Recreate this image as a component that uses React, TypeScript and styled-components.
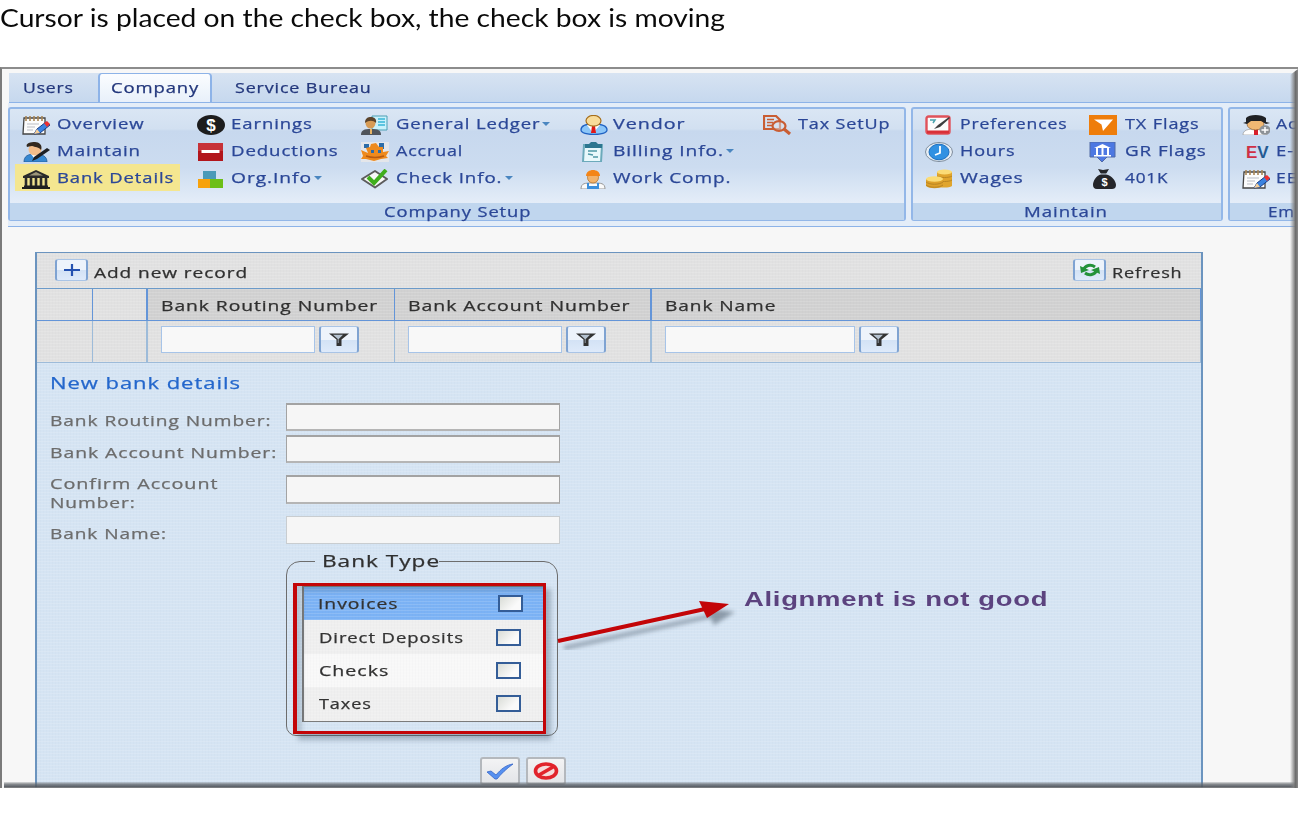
import React, { useLayoutEffect, useRef, useState } from 'react';
import styled, { createGlobalStyle, css } from 'styled-components';

const Global = createGlobalStyle`
  * { box-sizing: border-box; }
  body { margin: 0; background: #fff; font-family: "Open Sans", "Noto Sans", sans-serif; }
`;

/* ---------- text set to a fixed width ---------- */
const TextBox = styled.span<{ $w: number }>`
  display: block;
  flex: none;
  width: ${p => p.$w}px;
  white-space: nowrap;
  text-align: left;
`;
const TextInner = styled.span<{ $gap: number; $plain?: boolean }>`
  display: inline-block;
  transform-origin: 0 50%;
  letter-spacing: ${p => p.$gap}px;
  ${p => !p.$plain && '-webkit-text-stroke: 0.25px currentColor;'}
`;
function Wide({ w, gap = 0.7, plain, children }: { w: number; gap?: number; plain?: boolean; children: string }) {
  const ref = useRef<HTMLSpanElement>(null);
  const [scale, setScale] = useState(1);
  useLayoutEffect(() => {
    if (ref.current) setScale(w / (ref.current.offsetWidth - gap));
  }, [w, gap, children]);
  return (
    <TextBox $w={w}>
      <TextInner ref={ref} $gap={gap} $plain={plain} style={{ transform: `scaleX(${scale})` }}>{children}</TextInner>
    </TextBox>
  );
}

/* ---------- page ---------- */
const Page = styled.main`
  width: 1300px;
  height: 822px;
  overflow: hidden;
  background: #fff;
`;
const Title = styled.h1`
  margin: 0;
  height: 67px;
  font: 400 25.5px/34px Lato, "Open Sans", sans-serif;
  color: #0a0a0a;
`;
const Frame = styled.section`
  position: relative;
  width: 1298px;
  height: 721px;
  overflow: hidden;
  background: #f7f7f7;
  border-left: 2px solid #7b7b7b;
  border-top: 2px solid #8c8c8c;
  padding: 4px 0 0 6px;
`;
const BevelRight = styled.div`
  position: absolute;
  top: 0;
  right: 0;
  bottom: 0;
  width: 8px;
  background: linear-gradient(90deg, rgba(120,120,120,0), rgba(130,130,130,.75) 45%, #6c6c6c 70%, #8a8a8a);
  clip-path: polygon(100% 0, 100% 100%, 0 100%, 0 6px);
`;
const BevelBottom = styled.div`
  position: absolute;
  left: 2px;
  right: 0;
  bottom: 0;
  height: 6px;
  background: linear-gradient(rgba(110,115,120,.2), rgba(100,105,110,.75) 35%, rgba(80,85,92,.9) 75%, #8a8a8a);
`;

/* ---------- ribbon ---------- */
const Tabs = styled.nav`
  display: flex;
  height: 30px;
  width: 1300px;
  margin-left: 1px;
  background: linear-gradient(#d7e3f2, #c6d8ee);
  border-bottom: 1px solid #8db3e8;
  font-size: 14.5px;
  line-height: 30px;
  color: #23377c;
`;
const Tab = styled.a<{ $w: number; $pad: number; $active?: boolean }>`
  flex: none;
  width: ${p => p.$w}px;
  padding-left: ${p => p.$pad}px;
  ${p => p.$active && css`
    height: 29px;
    background: linear-gradient(#fbfdff, #e8f0fa);
    border: solid #8db3e8;
    border-width: 1px 2px 0;
    border-radius: 4px 4px 0 0;
    line-height: 28px;
  `}
`;
const Ribbon = styled.div`
  display: flex;
  gap: 5px;
  width: 1400px;
  height: 124px;
  padding: 4px 0 5px;
  background: #e4edf8;
  border-bottom: 1px solid #8db3e8;
`;
const Group = styled.section<{ $w: number }>`
  display: flex;
  flex-direction: column;
  flex: none;
  width: ${p => p.$w}px;
  border: 2px solid #93b7e8;
  border-bottom-width: 1px;
  border-radius: 3px;
  background: linear-gradient(#dae6f4, #d2e0f1 20px, #c7d8ee 22px, #ccdcf0 58px, #e4edf8 94px);
`;
const Columns = styled.div`
  display: flex;
  flex: 1;
  padding: 1px 0 0 5px;
`;
const Column = styled.div<{ $w: number }>`
  flex: none;
  width: ${p => p.$w}px;
`;
const Command = styled.button<{ $active?: boolean; $w?: number }>`
  display: flex;
  align-items: center;
  height: 27px;
  width: ${p => (p.$w ? p.$w + 'px' : 'auto')};
  padding: 0 0 0 7px;
  border: 0;
  background: ${p => (p.$active ? '#f4e690' : 'transparent')};
  color: #2b4797;
  font: 14.5px/22px "Open Sans", "Noto Sans", sans-serif;
`;
const IconCell = styled.span<{ $w: number }>`
  display: flex;
  flex: none;
  width: ${p => p.$w}px;
  padding-top: 2px;
`;
const Caption = styled.footer<{ $indent: number }>`
  height: 17px;
  padding-left: ${p => p.$indent}px;
  background: #c0d6ee;
  color: #2b4797;
  font-size: 14px;
  line-height: 17px;
`;
const Caret = styled.i`
  width: 0;
  border: 4.5px solid transparent;
  border-top: 4px solid #4a86c0;
  border-bottom: 0;
  margin-left: 3px;
`;

/* ---------- icons ---------- */
const notebook = (
  <>
    <path d="M2 3h21v16H1z" fill="#fcfcfc" stroke="#444" strokeWidth="1.3" />
    <path d="M4 1v5M8 1v5M12 1v5M16 1v5M20 1v5" stroke="#a98655" strokeWidth="1.6" />
    <path d="M5 9h12M5 12h8M5 15h6" stroke="#b9bcc4" />
    <path d="M12 19l3-5 9-7 4 3-10 8z" fill="#3b83e0" stroke="#173c88" />
    <path d="M22 8l3-2 3 3-3 3z" fill="#ee3030" /><path d="M12 19l3-5 3 4z" fill="#f6cf9a" />
  </>
);
const icons: Record<string, React.ReactNode> = {
  notebook,
  maintain: (
    <>
      <path d="M2 20c0-6 4-8 11-8s12 2 12 8z" fill="#3688d2" stroke="#245b94" strokeWidth=".8" />
      <path d="M9 12l3 4 5-4z" fill="#fff" />
      <ellipse cx="13" cy="7.500" rx="6.500" ry="6" fill="#f3bd8a" />
      <path d="M5 5C3 1 9 0 13 0s8 3 6 8c-2-3-6-3-9-4-2 0-4 1-5 1z" fill="#33291f" />
      <path d="M10 19l2-4 13-9 3 2-13 9z" fill="#1d1f23" />
    </>
  ),
  bank: (
    <>
      <path d="M1 7L14 1l13 6v2H1z" fill="#2a2a2a" /><path d="M7 6.500L14 3l7 3.500z" fill="#9c967a" />
      <path d="M4 9v8M9 9v8M14 9v8M19 9v8M24 9v8" stroke="#2a2a2a" strokeWidth="2.600" />
      <path d="M2 16.500h24V18h2v2H0v-2h2z" fill="#1f1f1f" />
    </>
  ),
  dollar: (
    <>
      <ellipse cx="14" cy="10" rx="14" ry="10" fill="#1d1d1d" />
      <text x="14" y="16" textAnchor="middle" fontSize="17" fontWeight="700" fill="#fff" fontFamily="Liberation Sans">$</text>
    </>
  ),
  minus: (<><path d="M1 1h25v18H1z" fill="#b2161c" /><path d="M1 1h25v8H1z" fill="#c73238" /><path d="M4.500 8h18v3h-18z" fill="#fff" /></>),
  blocks: (<><path d="M6 2h13v9H6z" fill="#4a9ab8" /><path d="M1 10h12v9H1z" fill="#f7a20c" /><path d="M13 10h13v9H13z" fill="#6cbf17" /></>),
  ledger: (
    <>
      <path d="M11 1h15v14H11z" fill="#c9f1fb" stroke="#4c9fb5" /><path d="M17 4h7M17 7h7M17 10h7" stroke="#37b5d8" strokeWidth="1.500" />
      <path d="M0 20c0-5 3-6 10-6s10 1 10 6z" fill="#50555c" />
      <ellipse cx="9.500" cy="8" rx="5" ry="5.500" fill="#d79b55" /><path d="M4 8c0-5 3-6 6-6s6 2 5 6c-3-3-7-3-11 0z" fill="#5b432b" /><path d="M9 14h2v5H9z" fill="#e6b366" />
    </>
  ),
  accrual: (
    <>
      <path d="M0 0h28v20H0z" fill="#e4e6ea" />
      <path d="M3 2h5v4H3zM18 1h5v6h-5z" fill="#2c6ca8" />
      <path d="M0 8l7 3-2-5 4-1 1-3 5-1 3 4 4 0 0 5 6-1-3 5 2 2-7 1-7 2-8-2-5 0 2-3z" fill="#ee8a1d" />
      <path d="M10 8h3v3h-3zM17 8h3v3h-3z" fill="#2c6ca8" />
      <path d="M5 14c6 2 12 2 18 0" stroke="#b85a10" strokeWidth="1.500" fill="none" />
    </>
  ),
  check: (
    <>
      <path d="M14 2l12 8-12 8.500L1 10z" fill="#f8f8f8" stroke="#5c5c5c" strokeWidth="2" strokeLinejoin="round" />
      <path d="M7 8l6 6L25 1" fill="none" stroke="#3fae1c" strokeWidth="4" />
    </>
  ),
  vendor: (
    <>
      <path d="M1 15c0-5 5-6 12-6s14 1 14 6c0 6-26 6-26 0z" fill="#8cc6f8" stroke="#1f61c2" strokeWidth="1.300" />
      <path d="M7 10l6 8 7-8z" fill="#fff" /><path d="M12 11h3l1 7h-5z" fill="#e01717" />
      <ellipse cx="13.500" cy="5.800" rx="7.500" ry="5.400" fill="#f8dc9a" stroke="#a66f1c" strokeWidth="1.200" />
    </>
  ),
  clipboard: (<><path d="M4 3h18l-1 17H3z" fill="#e8f8fb" stroke="#6caabb" strokeWidth="2" /><path d="M5 2h4l2-2h5l2 2h4v4H5z" fill="#2c7690" /><path d="M8 9h9M8 12l5 1M13 15h5" stroke="#4f98a7" strokeWidth="1.500" /></>),
  worker: (
    <>
      <path d="M1 20c0-6 4-6 12-6s12 0 12 6z" fill="#fafafa" stroke="#999" /><path d="M7 14h2v3h8v-3h2v6H7z" fill="#3b8edb" />
      <ellipse cx="13" cy="8.500" rx="5.500" ry="5.500" fill="#f2b36c" stroke="#b06c20" strokeWidth=".7" />
      <path d="M6 7c0-8 14-8 14 0z" fill="#f38518" />
    </>
  ),
  tax: (
    <>
      <path d="M1 1h12l4 4v9H1z" fill="none" stroke="#c95d33" strokeWidth="2.200" /><path d="M4 4.500h7M4 7.500h6M4 10.500h5" stroke="#c95d33" strokeWidth="1.500" />
      <ellipse cx="16" cy="11" rx="6.500" ry="4.800" fill="#dbe4ee" fillOpacity=".5" stroke="#c95d33" strokeWidth="2.200" /><path d="M21 14l6 5" stroke="#c95d33" strokeWidth="3.200" />
    </>
  ),
  prefs: (<><rect x="1.500" y="1.500" width="23" height="17" rx="2" fill="#fbfbfb" stroke="#e0525a" strokeWidth="2.400" /><path d="M2 17h22" stroke="#d93038" strokeWidth="3" /><path d="M5 5h5l-2 3" stroke="#49a2ad" strokeWidth="1.500" fill="none" /><path d="M9 14l4-4L24 2l1 1-10 9z" fill="#3d3d3d" /></>),
  clock: (<><ellipse cx="14" cy="10" rx="13.500" ry="9.500" fill="#e7eef5" stroke="#7c8b9b" /><ellipse cx="14" cy="10" rx="10" ry="7.800" fill="#3191e2" stroke="#1c6fc0" /><path d="M15 4v7l-5 2" fill="none" stroke="#fff" strokeWidth="1.800" /></>),
  coins: (
    <>
      <path d="M12 3v14c3 2 12 2 15 0V3z" fill="#e0a52d" /><path d="M12 7c3 2 12 2 15 0M12 11c3 2 12 2 15 0" fill="none" stroke="#b98522" />
      <ellipse cx="19.500" cy="3" rx="7.500" ry="2.500" fill="#fbdc76" />
      <path d="M1 10v7c3 3 14 3 17 0v-7z" fill="#dda02a" /><path d="M1 13c4 3 13 3 17 0M1 16c4 3 13 3 17 0" fill="none" stroke="#b98522" />
      <ellipse cx="9.500" cy="10" rx="8.500" ry="2.800" fill="#fbdc76" />
    </>
  ),
  tx: (<><path d="M0 0h28v20H0z" fill="#ee7d0b" /><path d="M5 4.500h19L14 16l-1.500-6.500z" fill="#fff" /></>),
  gr: (<><path d="M1 0h25v15h-8l-5 5-5-5H1z" fill="#4d78e2" stroke="#516aa5" /><path d="M5 6l8.500-4L22 6zM5 13h17v1.500H5z" fill="#fff" /><path d="M8 6v7M13.500 6v7M19 6v7" stroke="#fff" strokeWidth="2" /></>),
  bag: (
    <>
      <path d="M9 0l5 1 6-1-3 5c6 2 10 7 10 11 0 3-2 4-4 4H8c-3 0-4-2-4-4 0-4 3-9 8-11z" fill="#25262a" /><path d="M10 5h9" stroke="#c9d6e6" />
      <text x="15.500" y="17" textAnchor="middle" fontSize="11" fontWeight="700" fill="#fff" fontFamily="Liberation Sans">$</text>
    </>
  ),
  adduser: (
    <>
      <path d="M1 20c0-5 5-6 12-6s12 1 12 6z" fill="#fff" stroke="#999" strokeWidth=".7" /><path d="M12 14h4v6h-4z" fill="#d9202b" />
      <ellipse cx="13.500" cy="9" rx="8.500" ry="6" fill="#f1b873" stroke="#7a4c1f" strokeWidth=".6" />
      <path d="M1 8l3-1V3c3-4 16-4 20 0v4l4 1-4 1-5-3H9L5 9z" fill="#202124" />
      <ellipse cx="23" cy="15" rx="5.500" ry="4.800" fill="#8d9297" /><path d="M23 12v6M19.500 15h7" stroke="#fff" strokeWidth="1.500" />
    </>
  ),
  ev: (
    <text x="4" y="16" fontSize="17" fontWeight="700" fontFamily="Liberation Sans"><tspan fill="#cf2f45">E</tspan><tspan fill="#245a92">V</tspan></text>
  ),
};
const Art = styled.svg`
  display: block;
  flex: none;
`;
const Icon = ({ name }: { name: string }) => (
  <Art width="28" height="20" viewBox="0 0 28 20">{icons[name]}</Art>
);

type Item = { icon: string; text: string; w: number; menu?: boolean; active?: boolean };
type Col = { w: number; text: number; items: Item[] };
const groups: { w: number; caption: string; cw: number; indent: number; cols: Col[] }[] = [
  {
    w: 898, caption: 'Company Setup', cw: 147, indent: 374,
    cols: [
      { w: 175, text: 35, items: [{ icon: 'notebook', text: 'Overview', w: 86 }, { icon: 'maintain', text: 'Maintain', w: 83 }, { icon: 'bank', text: 'Bank Details', w: 116, active: true }] },
      { w: 164, text: 34, items: [{ icon: 'dollar', text: 'Earnings', w: 81 }, { icon: 'minus', text: 'Deductions', w: 107 }, { icon: 'blocks', text: 'Org.Info', w: 80, menu: true }] },
      { w: 219, text: 35, items: [{ icon: 'ledger', text: 'General Ledger', w: 143, menu: true }, { icon: 'accrual', text: 'Accrual', w: 67 }, { icon: 'check', text: 'Check Info.', w: 106, menu: true }] },
      { w: 183, text: 33, items: [{ icon: 'vendor', text: 'Vendor', w: 71 }, { icon: 'clipboard', text: 'Billing Info.', w: 110, menu: true }, { icon: 'worker', text: 'Work Comp.', w: 117 }] },
      { w: 140, text: 35, items: [{ icon: 'tax', text: 'Tax SetUp', w: 91 }] },
    ],
  },
  {
    w: 312, caption: 'Maintain', cw: 83, indent: 111,
    cols: [
      { w: 164, text: 35, items: [{ icon: 'prefs', text: 'Preferences', w: 106 }, { icon: 'clock', text: 'Hours', w: 55 }, { icon: 'coins', text: 'Wages', w: 63 }] },
      { w: 140, text: 36, items: [{ icon: 'tx', text: 'TX Flags', w: 74 }, { icon: 'gr', text: 'GR Flags', w: 81 }, { icon: 'bag', text: '401K', w: 43 }] },
    ],
  },
  {
    w: 160, caption: 'Em', cw: 26, indent: 38,
    cols: [
      { w: 150, text: 34, items: [{ icon: 'adduser', text: 'Ac', w: 21 }, { icon: 'ev', text: 'E-', w: 17 }, { icon: 'notebook', text: 'EE', w: 21 }] },
    ],
  },
];

/* ---------- grid ---------- */
const weave = css`
  background-image: repeating-linear-gradient(0deg, rgba(255,255,255,.13) 0 1px, transparent 1px 3px),
    repeating-linear-gradient(90deg, rgba(120,120,140,.025) 0 1px, transparent 1px 3px);
`;
const Panel = styled.section`
  width: 1168px;
  height: 600px;
  margin: 25px 0 0 27px;
  border: 2px solid #6b94bf;
  border-top-width: 1px;
  background-color: #d5e4f3;
  ${weave}
`;
const Toolbar = styled.header`
  display: flex;
  justify-content: space-between;
  height: 36px;
  padding: 5px 19px 0 18px;
  background-color: #e1e1e1;
  ${weave}
  border-bottom: 1px solid #6b9ac9;
  color: #303030;
  font-size: 14.5px;
  line-height: 29px;
`;
const Action = styled.div`
  display: flex;
  gap: 6px;
`;
const GlossButton = styled.button<{ $w: number; $h: number }>`
  display: flex;
  align-items: center;
  justify-content: center;
  flex: none;
  width: ${p => p.$w}px;
  height: ${p => p.$h}px;
  padding: 0;
  margin-top: 1px;
  border: 1px solid #a9c4e6;
  border-width: 1px 2px;
  border-color: #a9c4e6 #7fa3d2;
  border-radius: 3px;
  background: linear-gradient(#edf3fb 50%, #d3e2f5 52%, #deeafa);
`;
const Row = styled.div<{ $h: number; $line: string }>`
  display: flex;
  height: ${p => p.$h}px;
  border-bottom: 1px solid ${p => p.$line};
`;
const Cell = styled.div<{ $w?: number; $bg?: string; $edge?: number; $line: string }>`
  display: flex;
  align-items: flex-start;
  gap: 4px;
  flex: ${p => (p.$w ? 'none' : '1')};
  width: ${p => (p.$w ? p.$w + 'px' : 'auto')};
  background-color: ${p => p.$bg ?? '#e1e1e1'};
  ${weave}
  border-right: ${p => p.$edge ?? 1}px solid ${p => p.$line};
  padding-left: 13px;
  color: #303030;
  font-size: 14.5px;
  line-height: 33px;
`;
const FilterInput = styled.input<{ $w: number }>`
  width: ${p => p.$w}px;
  height: 27px;
  margin-top: 5px;
  border: 1px solid #a7c4e8;
  background: #f8f8f8;
`;
const FilterSlot = styled.span`
  display: flex;
  padding-top: 4px;
`;
const Funnel = () => (
  <FilterSlot>
    <GlossButton $w={40} $h={27}>
      <Art width="20" height="13" viewBox="0 0 20 13">
        <path d="M0 .5h20l-7.500 6V13h-5V6.500z" fill="#333" /><path d="M4 1.800h10l-4.500 4.500V10H8.800V6z" fill="#b5c2d0" />
      </Art>
    </GlossButton>
  </FilterSlot>
);

/* ---------- form ---------- */
const Form = styled.form`
  padding: 8px 0 0 13px;
`;
const FormTitle = styled.h2`
  margin: 0;
  height: 24px;
  color: #2467cc;
  font-size: 16px;
  font-weight: 400;
  line-height: 25px;
`;
const Field = styled.label<{ $top: number; $h: number }>`
  display: flex;
  align-items: center;
  height: ${p => p.$h}px;
  margin-top: ${p => p.$top}px;
  color: #6c6c6c;
  font-size: 14.5px;
  line-height: 19px;
`;
const FieldText = styled.span`
  flex: none;
  width: 236px;
  padding-top: 7px;
`;
const TextInput = styled.input<{ $soft?: boolean }>`
  width: 274px;
  height: 100%;
  background: #f6f6f6;
  border: 1px solid ${p => (p.$soft ? '#c9cdd0' : '#a3a3a3')};
  border-top-width: ${p => (p.$soft ? 1 : 2)}px;
  border-bottom-width: ${p => (p.$soft ? 1 : 2)}px;
  ${p => !p.$soft && 'border-bottom-color: #b5b5b5;'}
`;
const BankType = styled.fieldset`
  position: relative;
  min-width: 0;
  width: 272px;
  height: 185px;
  margin: 7px 0 0 236px;
  padding: 0;
  border: 1px solid #6d6d6d;
  border-radius: 14px 14px 10px 10px;
`;
const Legend = styled.legend`
  height: 20px;
  margin-left: 28px;
  padding: 0 0 0 7px;
  color: #303030;
  font-size: 15.5px;
  line-height: 20px;
`;
const List = styled.div`
  width: 242px;
  margin: 15px 0 0 15px;
  border: solid #7b7b7b;
  border-width: 1px 0 1px 2px;
`;
const Option = styled.label<{ $bg: string; $shift?: boolean }>`
  display: flex;
  align-items: center;
  justify-content: space-between;
  height: 33.400px;
  padding: 0 ${p => (p.$shift ? 21 : 23)}px 0 ${p => (p.$shift ? 14 : 15)}px;
  background-color: ${p => p.$bg};
  ${weave}
  color: #333;
  font-size: 14px;
`;
const Box = styled.span`
  width: 25px;
  height: 17px;
  border: 2px solid #345d97;
  background: linear-gradient(135deg, #d9dcd6, #fafafa 70%);
`;
const Highlight = styled.div`
  position: absolute;
  left: 6px;
  top: 12px;
  width: 253px;
  height: 151px;
  border: 4px solid #c30508;
  border-width: 3px 3px 3px 4px;
  box-shadow: 5px 6px 5px rgba(60,80,100,.35), inset 5px 5px 4px rgba(60,80,100,.22);
`;
const Buttons = styled.div`
  display: flex;
  gap: 6px;
  margin: 21px 0 0 430px;
`;
const FormButton = styled.button`
  display: flex;
  align-items: center;
  justify-content: center;
  width: 40px;
  height: 28px;
  padding: 0;
  border: 2px solid #b4b8bd;
  border-radius: 3px;
  background: linear-gradient(#f3f3f4, #e3e5e8);
`;
const Note = styled.div`
  position: absolute;
  left: 555px;
  top: 515px;
  display: flex;
  gap: 5px;
  color: #5c437f;
  font: 700 20px/30px "Liberation Sans", Arial, sans-serif;
`;

const BLUE = '#6495d8';
const PALE = '#9dbbd9';

export default function App() {
  return (
    <Page>
      <Global />
      <Title><Wide w={725} gap={0} plain>Cursor is placed on the check box, the check box is moving</Wide></Title>
      <Frame>
        <Tabs>
          <Tab $w={89} $pad={14}><Wide w={50}>Users</Wide></Tab>
          <Tab $w={114} $pad={11} $active><Wide w={87}>Company</Wide></Tab>
          <Tab $w={170} $pad={23}><Wide w={136}>Service Bureau</Wide></Tab>
        </Tabs>
        <Ribbon>
          {groups.map(g => (
            <Group key={g.caption} $w={g.w}>
              <Columns>
                {g.cols.map((c, i) => (
                  <Column key={i} $w={c.w}>
                    {c.items.map(it => (
                      <Command key={it.text} $active={it.active} $w={it.active ? 165 : undefined}>
                        <IconCell $w={c.text}><Icon name={it.icon} /></IconCell>
                        <Wide w={it.w}>{it.text}</Wide>
                        {it.menu && <Caret />}
                      </Command>
                    ))}
                  </Column>
                ))}
              </Columns>
              <Caption $indent={g.indent}><Wide w={g.cw}>{g.caption}</Wide></Caption>
            </Group>
          ))}
        </Ribbon>

        <Panel>
          <Toolbar>
            <Action>
              <GlossButton $w={33} $h={22}>
                <Art width="16" height="12" viewBox="0 0 16 12"><path d="M0 6h16M8 0v12" stroke="#2451b0" strokeWidth="2.200" /></Art>
              </GlossButton>
              <Wide w={153}>Add new record</Wide>
            </Action>
            <Action>
              <GlossButton $w={33} $h={22}>
                <Art width="20" height="14" viewBox="0 0 20 14">
                  <path d="M3.500 7C5 2 11 1 15 4M16.500 7C15 12 9 13 5 10" fill="none" stroke="#23923a" strokeWidth="3" />
                  <path d="M0 3l1 7 8-3zM20 11l-1-7-8 3z" fill="#23923a" />
                </Art>
              </GlossButton>
              <Wide w={70}>Refresh</Wide>
            </Action>
          </Toolbar>
          <Row $h={32} $line={BLUE}>
            <Cell $w={56} $line={BLUE} />
            <Cell $w={55} $line={BLUE} $edge={2} />
            <Cell $w={247} $line={BLUE} $bg="#d1d1d1"><Wide w={216}>Bank Routing Number</Wide></Cell>
            <Cell $w={257} $line={BLUE} $bg="#d1d1d1" $edge={2}><Wide w={222}>Bank Account Number</Wide></Cell>
            <Cell $line={BLUE} $bg="#d1d1d1"><Wide w={111}>Bank Name</Wide></Cell>
          </Row>
          <Row $h={42} $line={PALE}>
            <Cell $w={56} $line={PALE} />
            <Cell $w={55} $line={PALE} $edge={2} />
            <Cell $w={247} $line={PALE}><FilterInput $w={154} /><Funnel /></Cell>
            <Cell $w={257} $line={PALE} $edge={2}><FilterInput $w={154} /><Funnel /></Cell>
            <Cell $line={PALE}><FilterInput $w={190} /><Funnel /></Cell>
          </Row>
          <Form>
            <FormTitle><Wide w={190}>New bank details</Wide></FormTitle>
            <Field $top={8} $h={28}><FieldText><Wide w={221}>Bank Routing Number:</Wide></FieldText><TextInput /></Field>
            <Field $top={4} $h={28}><FieldText><Wide w={226}>Bank Account Number:</Wide></FieldText><TextInput /></Field>
            <Field $top={12} $h={29}>
              <FieldText><Wide w={168}>Confirm Account</Wide><Wide w={85}>Number:</Wide></FieldText><TextInput />
            </Field>
            <Field $top={12} $h={28}><FieldText><Wide w={116}>Bank Name:</Wide></FieldText><TextInput $soft /></Field>
            <BankType>
              <Legend><Wide w={117}>Bank Type</Wide></Legend>
              <List>
                <Option $bg="#7bb2f5" $shift><Wide w={79}>Invoices</Wide><Box /></Option>
                <Option $bg="#efefef"><Wide w={144}>Direct Deposits</Wide><Box /></Option>
                <Option $bg="#f8f8f8"><Wide w={69}>Checks</Wide><Box /></Option>
                <Option $bg="#efefef"><Wide w={52}>Taxes</Wide><Box /></Option>
              </List>
              <Highlight />
            </BankType>
            <Buttons>
              <FormButton type="button">
                <Art width="28" height="17" viewBox="0 0 28 17"><path d="M1 9l4-1 5 4C15 6 20 2 27 1 20 6 15 11 11 16H9z" fill="#5690f0" stroke="#3565c8" strokeWidth=".8" /></Art>
              </FormButton>
              <FormButton type="button">
                <Art width="26" height="18" viewBox="0 0 26 18"><ellipse cx="13" cy="9" rx="10.500" ry="7" fill="#f5dcdc" stroke="#e1232b" strokeWidth="3.600" /><path d="M6 13L20 5" stroke="#e1232b" strokeWidth="3.600" /></Art>
              </FormButton>
            </Buttons>
          </Form>
        </Panel>

        <Note>
          <Art width="182" height="66" viewBox="0 0 182 66">
            <defs><filter id="soft" x="-10%" y="-30%" width="120%" height="160%"><feGaussianBlur stdDeviation="2.200" /></filter></defs>
            <g transform="translate(6 7)" filter="url(#soft)" opacity=".45">
              <path d="M1 57L148 25" stroke="#405060" strokeWidth="4" /><path d="M143 17l29 4-21 13z" fill="#304050" />
            </g>
            <path d="M1 57L148 25" stroke="#c30508" strokeWidth="4" /><path d="M142 17l30 3-22 14z" fill="#c30508" />
          </Art>
          <Wide w={304} gap={0.5} plain>Alignment is not good</Wide>
        </Note>
        <BevelBottom />
        <BevelRight />
      </Frame>
    </Page>
  );
}
